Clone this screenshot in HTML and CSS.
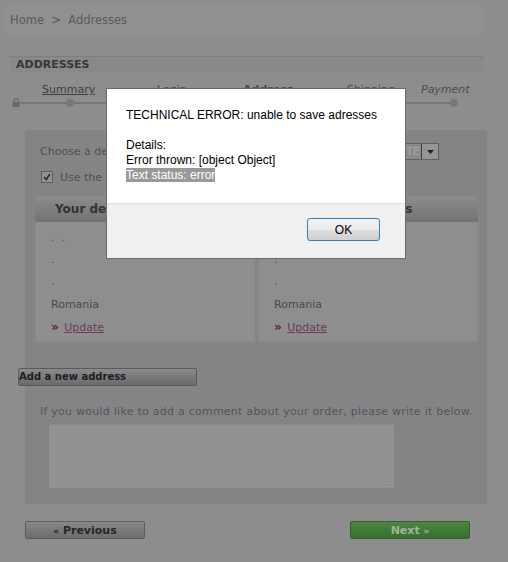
FILE: index.html
```html
<!DOCTYPE html>
<html>
<head>
<meta charset="utf-8">
<title>Addresses</title>
<link rel="stylesheet" href="styles.css">
</head>
<body>
<div class="page">
  <div class="crumbs">Home&nbsp; &gt;&nbsp; Addresses</div>
  <h1 class="title">ADDRESSES</h1>
  <div class="steps">
    <div class="labels">
      <a class="step done">Summary</a>
      <span class="step">Login</span>
      <span class="step current">Address</span>
      <span class="step">Shipping</span>
      <span class="step last">Payment</span>
    </div>
    <div class="track">
      <svg class="lock" width="8" height="9" viewBox="0 0 8 9"><path d="M2 4V2.6a2 2 0 0 1 4 0V4" fill="none" stroke="#6a6a6a" stroke-width="1.3"/><rect x="0.5" y="4" width="7" height="5" rx="1" fill="#6a6a6a"/></svg>
      <span class="dot first"></span><span class="dot"></span><span class="dot"></span><span class="dot"></span><span class="dot"></span>
    </div>
  </div>
  <div class="panel">
    <div class="choose">
      <span>Choose a delivery address:</span>
      <span class="select"><span class="select-text">MY ADDRESS NOTE</span><span class="select-btn"><svg width="7" height="4" viewBox="0 0 7 4"><path d="M0 0h7L3.5 4z" fill="#222"/></svg></span></span>
    </div>
    <div class="same">
      <span class="check"><svg width="10" height="10" viewBox="0 0 10 10"><path d="M2 5l2.2 2.5L8 2" fill="none" stroke="#2a2a2a" stroke-width="1.6"/></svg></span>
      <span>Use the delivery address as the billing address.</span>
    </div>
    <div class="boxes">
      <div class="box">
        <div class="box-head">Your delivery address</div>
        <div class="box-body">
          <div class="line name">. .</div>
          <div class="line">.</div>
          <div class="line">.</div>
          <div class="line country">Romania</div>
          <div class="line upd"><span class="raquo">»</span> <a class="link">Update</a></div>
        </div>
      </div>
      <div class="box">
        <div class="box-head">Your billing address</div>
        <div class="box-body">
          <div class="line name">. .</div>
          <div class="line">.</div>
          <div class="line">.</div>
          <div class="line country">Romania</div>
          <div class="line upd"><span class="raquo">»</span> <a class="link">Update</a></div>
        </div>
      </div>
    </div>
    <div class="add">Add a new address</div>
    <p class="comment-label">If you would like to add a comment about your order, please write it below.</p>
    <div class="textarea"><span class="grip"></span></div>
  </div>
  <div class="nav">
    <a class="btn prev"><span class="small">«</span> Previous</a>
    <a class="btn next">Next <span class="small">»</span></a>
  </div>
</div>

<div class="dialog">
  <div class="dialog-body">TECHNICAL ERROR: unable to save adresses<br><br>Details:<br>Error thrown: [object Object]<br><span class="sel">Text status: error</span></div>
  <div class="dialog-foot"><button class="ok">OK</button></div>
</div>
</body>
</html>
```

FILE: styles.css
```css
html, body {
  margin: 0;
  padding: 0;
}
body {
  background: #8d8d8d;
  font-family: "DejaVu Sans", Verdana, sans-serif;
  font-size: 11px;
  color: #4e4e4e;
  width: 508px;
  height: 562px;
  overflow: hidden;
  position: relative;
}
.page {
  width: 508px;
}
.crumbs {
  margin: 5px 0 0 5px;
  width: 480px;
  height: 30px;
  line-height: 30px;
  padding-left: 5px;
  box-sizing: border-box;
  font-size: 11.5px;
  color: #595959;
  background: #909090;
}
.title {
  margin: 21px 0 0 10px;
  width: 474px;
  height: 17px;
  box-sizing: border-box;
  border-top: 1px solid #7e7e7e;
  background: #898989;
  padding-left: 6px;
  font-size: 11px;
  line-height: 16px;
  font-weight: bold;
  color: #363636;
}
.steps {
  height: 56px;
  padding-top: 10px;
  box-sizing: border-box;
}
.labels {
  display: grid;
  grid-template-columns: 115px 86px 104px 74px auto;
  padding-left: 42px;
  height: 13px;
  line-height: 13px;
  font-size: 11px;
  color: #4a4a4a;
}
.step.done {
  text-decoration: underline;
  color: #3e3e3e;
}
.step.current {
  font-weight: bold;
}
.step.last {
  font-style: italic;
  color: #4c4c4c;
}
.track {
  margin: 2px 0 0 12px;
  width: 447px;
  height: 9px;
  display: flex;
  align-items: center;
  background: linear-gradient(#777, #777) no-repeat 3px center / 440px 2px;
}
.lock {
  display: block;
  flex: none;
}
.dot {
  width: 8px;
  height: 8px;
  border-radius: 50%;
  background: #777;
  margin-left: 88px;
  flex: none;
}
.dot.first {
  margin-left: 46px;
}
.panel {
  margin: 1px 0 0 25px;
  width: 462px;
  background: #848487;
  padding: 13px 0 16px 0;
  box-sizing: border-box;
}
.choose {
  margin: 0 48px 0 15px;
  height: 17px;
  display: flex;
  align-items: center;
  justify-content: space-between;
  color: #505050;
}
.select {
  display: flex;
  width: 110px;
  height: 17px;
  box-sizing: border-box;
  border: 1px solid #606060;
  background: #8a8a8a;
}
.select-text {
  flex: 1;
  display: flex;
  justify-content: flex-end;
  overflow: hidden;
  white-space: nowrap;
  color: #a4a4a4;
  line-height: 15px;
  padding-right: 1px;
}
.select-btn {
  width: 16px;
  flex: none;
  display: flex;
  align-items: center;
  justify-content: center;
  background: #959595;
  border-left: 1px solid #3c3c3c;
}
.same {
  margin: 11px 0 0 16px;
  height: 12px;
  display: flex;
  align-items: center;
  gap: 7px;
  color: #505050;
}
.check {
  width: 12px;
  height: 12px;
  box-sizing: border-box;
  border: 1px solid #5e5e5e;
  background: #939393;
  display: flex;
  align-items: center;
  justify-content: center;
}
.boxes {
  margin: 13px 0 0 10px;
  display: flex;
  gap: 3px;
}
.box {
  width: 220px;
  height: 146px;
  display: flex;
  flex-direction: column;
}
.box-head {
  height: 26px;
  line-height: 26px;
  padding-left: 20px;
  font-size: 12px;
  font-weight: bold;
  color: #333;
  background: linear-gradient(#8c8c8c, #727274);
  border-radius: 3px 3px 0 0;
  white-space: nowrap;
}
.box-body {
  flex: 1;
  background: #8e8e8f;
  border: 1px solid #89898b;
  border-top: none;
  padding: 5px 0 0 15px;
}
.line {
  height: 22px;
  line-height: 22px;
  color: #494949;
}
.line.name {
  color: #76475c;
  letter-spacing: 2px;
}
.line.country {
  margin-top: 1px;
}
.line.upd {
  margin-top: 0;
}
.raquo {
  color: #5b2a42;
  font-weight: bold;
  font-size: 12px;
}
.link {
  color: #6d3a56;
  text-decoration: underline;
  margin-left: 2px;
}
.add {
  margin: 26px 0 0 -7px;
  width: 179px;
  height: 18px;
  box-sizing: border-box;
  border: 1px solid #5a5a5c;
  border-radius: 2px;
  background: linear-gradient(#8a8a8c, #6a6a6c);
  font-size: 10px;
  font-weight: bold;
  line-height: 16px;
  color: #1e1e1e;
}
.comment-label {
  margin: 19px 0 0 15px;
  height: 13px;
  line-height: 13px;
  color: #555;
  letter-spacing: 0.25px;
  white-space: nowrap;
}
.textarea {
  margin: 6px 0 0 24px;
  width: 345px;
  height: 64px;
  box-sizing: border-box;
  background: #929292;
  border-top: 1px solid #8a8a8a;
  display: flex;
  justify-content: flex-end;
  align-items: flex-end;
}
.grip {
  width: 6px;
  height: 6px;
  margin: 0 2px 2px 0;
  background: radial-gradient(circle, #7a7a7a 0.8px, transparent 1px) 0 0 / 3px 3px;
}
.nav {
  margin: 17px 0 0 25px;
  width: 445px;
  display: flex;
  justify-content: space-between;
}
.btn {
  width: 120px;
  height: 18px;
  box-sizing: border-box;
  border-radius: 2px;
  font-size: 11px;
  font-weight: bold;
  line-height: 17px;
  text-align: center;
}
.btn .small {
  font-size: 9px;
}
.prev {
  border: 1px solid #5c5c5e;
  background: linear-gradient(#88888a, #6c6c6e);
  color: #262626;
}
.next {
  border: 1px solid #355f2e;
  background: linear-gradient(#4c8741, #3a6d31);
  color: #a0b59a;
}
.dialog {
  position: absolute;
  left: 106px;
  top: 88px;
  width: 300px;
  box-sizing: border-box;
  border: 1px solid #6c6c6c;
  background: #fff;
  font-family: "Liberation Sans", Arial, sans-serif;
  font-size: 12px;
  line-height: 15px;
  color: #000;
}
.dialog-body {
  height: 114px;
  box-sizing: border-box;
  padding: 19px 0 0 19px;
}
.sel {
  background: #999;
  color: #fff;
}
.dialog-foot {
  height: 55px;
  box-sizing: border-box;
  background: #f0f0f0;
  border-top: 1px solid #dfdfdf;
  display: flex;
  justify-content: flex-end;
  padding: 14px 25px 0 0;
}
.ok {
  width: 73px;
  height: 23px;
  box-sizing: border-box;
  border: 1px solid #3c7fb1;
  border-radius: 3px;
  background: linear-gradient(#f2f2f2 0%, #ebebeb 50%, #dddddd 51%, #cfcfcf 100%);
  font-family: "Liberation Sans", Arial, sans-serif;
  font-size: 12px;
  color: #000;
  padding: 0;
}
```
